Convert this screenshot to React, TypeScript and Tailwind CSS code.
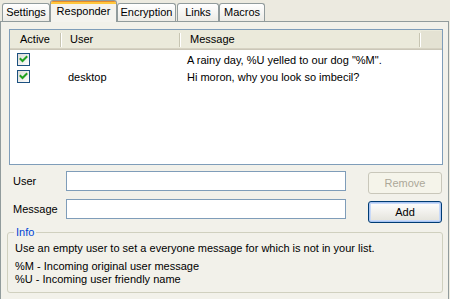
import React from "react";

function Check() {
  return (
    <div className="w-[13px] h-[13px] border border-[#1C5180] bg-gradient-to-br from-[#DCDCD7] to-white flex items-center justify-center">
      <svg width="11" height="11" viewBox="0 0 11 11">
        <path d="M2.5 5 L4.5 7 L8.5 3" stroke="#21A121" strokeWidth="2" fill="none" strokeLinecap="square" />
      </svg>
    </div>
  );
}

function Sep() {
  return (
    <div className="flex h-full items-center">
      <div className="w-px h-[14px] bg-[#C7C5B2]" />
      <div className="w-px h-[14px] bg-white" />
    </div>
  );
}

function Tab({ label, w }: { label: string; w: string }) {
  return (
    <div
      className={`${w} h-[18px] border border-b-0 border-[#919B9C] rounded-t-[3px] bg-gradient-to-b from-white to-[#ECEBE6] flex items-center justify-center`}
    >
      {label}
    </div>
  );
}

export default function App() {
  return (
    <div className="w-[450px] h-[299px] overflow-hidden bg-[#ECEAE0] text-[11px] leading-[13px] text-black font-['Liberation_Sans',Tahoma,Arial,sans-serif]">
      {/* tabs */}
      <div className="flex items-end h-[21px] pl-[2px]">
        <Tab label="Settings" w="w-[48px]" />
        <div className="relative z-10 -mb-px w-[67px] h-[22px] border border-b-0 border-[#919B9C] rounded-t-[3px] bg-[#F4F3EE] flex flex-col overflow-hidden">
          <div className="h-px bg-[#E68B2C]" />
          <div className="h-[2px] bg-[#FFC73C]" />
          <div className="flex-1 flex items-start justify-center pt-[1px]">Responder</div>
        </div>
        <Tab label="Encryption" w="w-[59px]" />
        <div className="w-px" />
        <Tab label="Links" w="w-[42px]" />
        <Tab label="Macros" w="w-[46px]" />
      </div>

      {/* panel */}
      <div className="w-[449px] h-[279px] border-t border-l border-r border-[#919B9C] bg-[#F2F1EA] pl-[8px] pt-[7px]">
        {/* list */}
        <div className="w-[434px] h-[136px] border border-[#7F9DB9] bg-white flex flex-col">
          <div className="flex flex-col bg-[#EBEADB]">
            <div className="flex h-[18px] items-center pt-[1px]">
              <div className="w-[50px] pl-[10px]">Active</div>
              <Sep />
              <div className="w-[117px] pl-[8px]">User</div>
              <Sep />
              <div className="w-[238px] pl-[9px]">Message</div>
              <Sep />
              <div className="flex-1 h-full bg-[#E4E2D3]" />
            </div>
            <div className="h-px bg-[#D6D2C2]" />
            <div className="h-px bg-[#CBC7B8]" />
          </div>
          <div className="flex h-[17px]">
            <div className="w-[50px] pl-[7px] pt-[3px]">
              <Check />
            </div>
            <div className="w-[119px] pl-[8px] pt-[4px]"></div>
            <div className="pl-[8px] pt-[4px]">A rainy day, %U yelled to our dog "%M".</div>
          </div>
          <div className="flex h-[17px]">
            <div className="w-[50px] pl-[7px] pt-[3px]">
              <Check />
            </div>
            <div className="w-[119px] pl-[8px] pt-[4px]">desktop</div>
            <div className="pl-[8px] pt-[4px]">Hi moron, why you look so imbecil?</div>
          </div>
        </div>

        {/* form rows */}
        <div className="flex mt-[6px] h-[28px]">
          <div className="w-[57px] pl-[4px] pt-[4px]">User</div>
          <div className="w-[280px] h-[20px] border border-[#7F9DB9] bg-white" />
          <div className="w-[22px]" />
          <div className="mt-[1px] w-[74px] h-[22px] border border-[#C9C7BA] rounded-[3px] bg-[#F5F4EA] text-[#ACA899] flex items-center justify-center">
            Remove
          </div>
        </div>
        <div className="flex h-[24px]">
          <div className="w-[57px] pl-[4px] pt-[4px]">Message</div>
          <div className="w-[280px] h-[20px] border border-[#7F9DB9] bg-white" />
          <div className="w-[22px]" />
          <div className="mt-[2px] w-[74px] h-[22px] border border-[#003C74] rounded-[3px] bg-gradient-to-b from-white to-[#E3E2DA] shadow-[inset_0_0_0_1px_#A8C4F2,inset_0_0_0_2px_#C9DAF8] flex items-center justify-center">
            Add
          </div>
        </div>

        {/* info */}
        <fieldset className="-ml-[2px] mt-[3px] w-[436px] h-[67px] border border-[#D0D0BF] rounded-[3px]">
          <legend className="ml-[6px] px-[2px] text-[#0046D5]">Info</legend>
          <div className="pl-[7px] pt-[3px]">
            Use an empty user to set a everyone message for which is not in your list.
          </div>
          <div className="pl-[7px] mt-[5px]">%M - Incoming original user message</div>
          <div className="pl-[7px]">%U - Incoming user friendly name</div>
        </fieldset>
      </div>
    </div>
  );
}
